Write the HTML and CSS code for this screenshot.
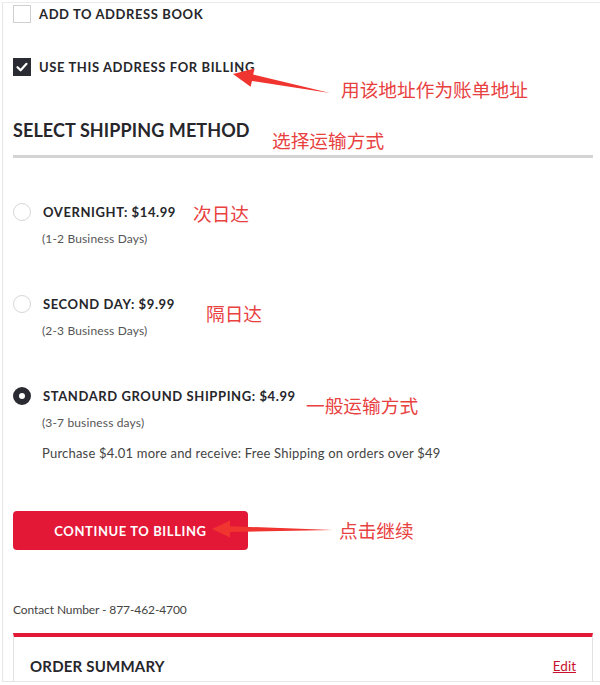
FILE: index.html
```html
<!DOCTYPE html>
<html lang="en">
<head>
<meta charset="utf-8">
<title>Shipping</title>
<link rel="stylesheet" href="styles.css">
</head>
<body>
<div class="page">
  <label class="check-row">
    <span class="checkbox"></span>
    <span class="check-label">ADD TO ADDRESS BOOK</span>
  </label>
  <label class="check-row second">
    <span class="checkbox checked">
      <svg viewBox="0 0 18 18" width="18" height="18"><path d="M4.5 9.2 L7.6 12.3 L13.5 5.8" fill="none" stroke="#fff" stroke-width="2.2" stroke-linecap="round" stroke-linejoin="round"/></svg>
    </span>
    <span class="check-label">USE THIS ADDRESS FOR BILLING</span>
  </label>

  <h2 class="section-title">SELECT SHIPPING METHOD</h2>
  <div class="rule"></div>

  <div class="option first">
    <span class="radio"></span>
    <div class="option-body">
      <div class="option-label">OVERNIGHT: $14.99</div>
      <div class="option-sub">(1-2 Business Days)</div>
    </div>
  </div>
  <div class="option">
    <span class="radio"></span>
    <div class="option-body">
      <div class="option-label">SECOND DAY: $9.99</div>
      <div class="option-sub">(2-3 Business Days)</div>
    </div>
  </div>
  <div class="option">
    <span class="radio selected"></span>
    <div class="option-body">
      <div class="option-label">STANDARD GROUND SHIPPING: $4.99</div>
      <div class="option-sub">(3-7 business days)</div>
      <div class="option-note">Purchase $4.01 more and receive: Free Shipping on orders over $49</div>
    </div>
  </div>

  <button class="continue">CONTINUE TO BILLING</button>

  <p class="contact">Contact Number - 877-462-4700</p>

  <div class="summary">
    <span class="summary-title">ORDER SUMMARY</span>
    <a class="summary-edit" href="#">Edit</a>
  </div>
</div>

<div class="note n1">用该地址作为账单地址</div>
<div class="note n2">选择运输方式</div>
<div class="note n3">次日达</div>
<div class="note n4">隔日达</div>
<div class="note n5">一般运输方式</div>
<div class="note n6">点击继续</div>

<svg class="arrows" viewBox="0 0 600 685" width="600" height="685">
  <polygon points="233,74 254.5,68.5 253.2,74.6 330,93 252,80.9 250.6,86.8" fill="#f0342f"/>
  <polygon points="212,529 230,520.5 230,526.2 333,530 230,532 230,537.5" fill="#f0342f"/>
</svg>
</body>
</html>
```

FILE: styles.css
```css
* { box-sizing: border-box; }
html, body { margin: 0; padding: 0; background: #fff; }
body {
  position: relative;
  width: 600px;
  height: 685px;
  overflow: hidden;
  font-family: Lato, "Liberation Sans", sans-serif;
  color: #26262b;
}
.page {
  margin: 2px 0 0 2px;
  height: 680px;
  border-left: 1px solid #e6e6e6;
  border-top: 1px solid #ececec;
  border-bottom: 1px solid #e6e6e6;
  padding: 2px 7px 0 10px;
  overflow: hidden;
}
.check-row {
  display: flex;
  align-items: center;
  height: 18px;
  gap: 8px;
}
.check-row.second { margin-top: 35px; }
.checkbox {
  width: 18px;
  height: 18px;
  border: 1px solid #cfcfcf;
  background: #fff;
  flex: none;
  display: flex;
}
.checkbox.checked { background: #2b2b33; border-color: #2b2b33; }
.checkbox svg { display: block; margin: -1px; }
.check-label {
  font-size: 13px;
  font-weight: 700;
  letter-spacing: 0.6px;
  color: #26262b;
}
.section-title {
  margin: 42px 0 0;
  font-size: 18px;
  line-height: 24px;
  font-weight: 700;
  letter-spacing: 0.1px;
  color: #26262b;
}
.rule {
  margin-top: 13px;
  height: 3px;
  background: #d4d4d4;
}
.option {
  display: flex;
  align-items: flex-start;
  gap: 12px;
  margin-top: 48px;
}
.option.first { margin-top: 45px; }
.radio {
  width: 18px;
  height: 18px;
  border-radius: 50%;
  border: 1px solid #d6d6d6;
  flex: none;
}
.radio.selected { border: 6px solid #2b2b33; }
.option-label {
  font-size: 13px;
  line-height: 18px;
  font-weight: 700;
  letter-spacing: 0.6px;
  color: #26262b;
}
.option-sub {
  margin-top: 10px;
  font-size: 12px;
  line-height: 16px;
  letter-spacing: 0.15px;
  color: #555;
  margin-left: -1px;
}
.option-note {
  margin-top: 14px;
  font-size: 13px;
  line-height: 16px;
  letter-spacing: 0.2px;
  color: #444;
  margin-left: -1px;
}
.continue {
  display: block;
  margin-top: 50px;
  width: 235px;
  height: 39px;
  border: none;
  border-radius: 4px;
  background: #e31837;
  color: #fff;
  font-family: Lato, "Liberation Sans", sans-serif;
  font-size: 13px;
  font-weight: 700;
  letter-spacing: 0.6px;
  padding: 0;
}
.contact {
  margin: 52px 0 0;
  font-size: 12px;
  line-height: 16px;
  letter-spacing: -0.1px;
  color: #444;
}
.summary {
  margin-top: 15px;
  border-top: 4px solid #e31837;
  border-left: 1px solid #e2e2e2;
  border-right: 1px solid #e2e2e2;
  height: 120px;
  padding: 18px 16px 0 16px;
  display: flex;
  justify-content: space-between;
  align-items: flex-start;
}
.summary-title {
  font-size: 15px;
  line-height: 22px;
  font-weight: 700;
  letter-spacing: 0.2px;
  color: #26262b;
}
.summary-edit {
  font-size: 13.5px;
  line-height: 22px;
  color: #c8102e;
  text-decoration: underline;
}
.note {
  position: absolute;
  font-family: "Noto Sans CJK SC", sans-serif;
  font-size: 18.7px;
  line-height: 20px;
  color: #e8413f;
  white-space: nowrap;
}
.n1 { left: 341px; top: 79px; }
.n2 { left: 272px; top: 130px; }
.n3 { left: 193px; top: 203px; }
.n4 { left: 206px; top: 303px; }
.n5 { left: 306px; top: 395px; }
.n6 { left: 339px; top: 520px; }
.arrows {
  position: absolute;
  left: 0;
  top: 0;
  pointer-events: none;
}
```
